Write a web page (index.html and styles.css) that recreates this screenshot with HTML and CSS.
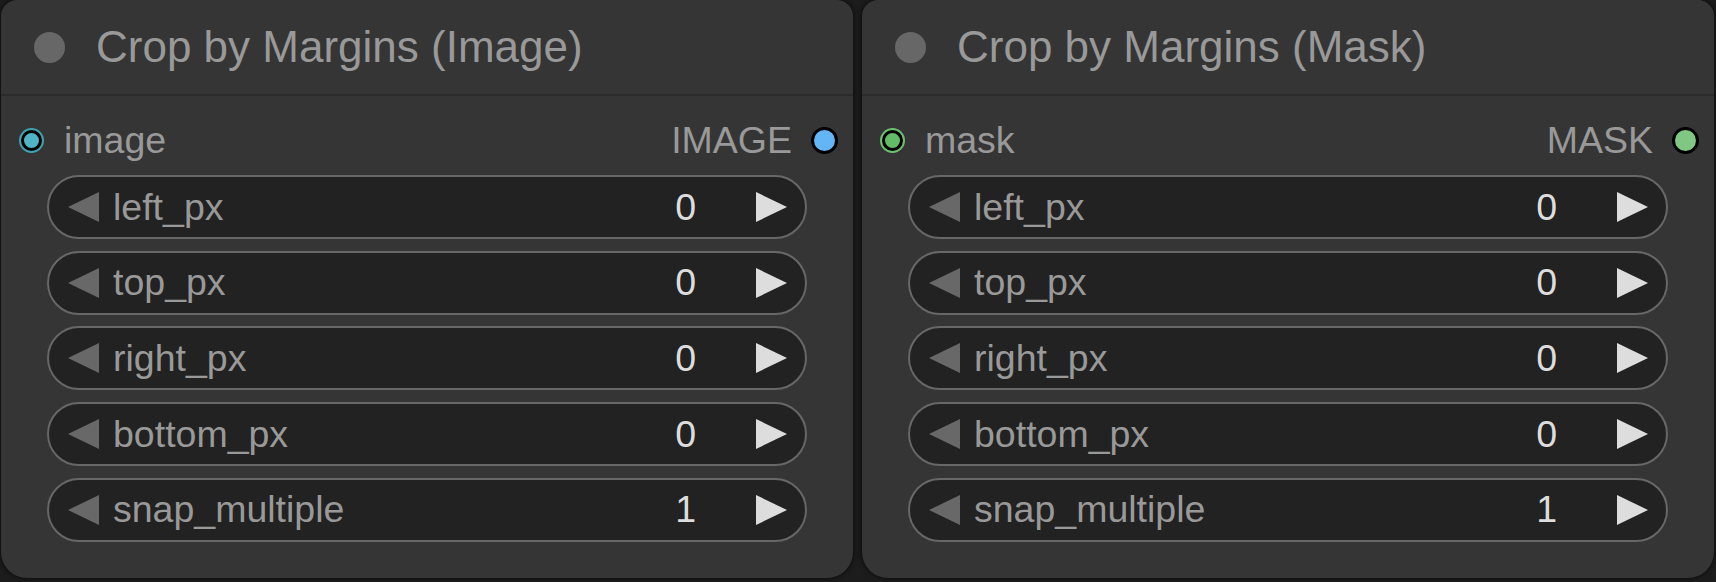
FILE: index.html
```html
<!DOCTYPE html>
<html>
<head>
<meta charset="utf-8">
<link rel="stylesheet" href="styles.css">
</head>
<body>
<div class="canvas">
  <div class="node">
    <div class="node-header">
      <span class="node-dot"></span>
      <span class="node-title">Crop by Margins (Image)</span>
    </div>
    <div class="slots">
      <span class="in-dot in-image"></span>
      <span class="slot-label">image</span>
      <span class="out-label">IMAGE</span>
      <span class="out-dot out-image"></span>
    </div>
    <div class="widgets">
      <div class="widget"><svg class="arrow arrow-left" viewBox="0 0 31 30"><polygon points="0,15 31,0 31,30"/></svg><span class="w-label">left_px</span><span class="w-value">0</span><svg class="arrow arrow-right" viewBox="0 0 31 30"><polygon points="0,0 31,15 0,30"/></svg></div>
      <div class="widget"><svg class="arrow arrow-left" viewBox="0 0 31 30"><polygon points="0,15 31,0 31,30"/></svg><span class="w-label">top_px</span><span class="w-value">0</span><svg class="arrow arrow-right" viewBox="0 0 31 30"><polygon points="0,0 31,15 0,30"/></svg></div>
      <div class="widget"><svg class="arrow arrow-left" viewBox="0 0 31 30"><polygon points="0,15 31,0 31,30"/></svg><span class="w-label">right_px</span><span class="w-value">0</span><svg class="arrow arrow-right" viewBox="0 0 31 30"><polygon points="0,0 31,15 0,30"/></svg></div>
      <div class="widget"><svg class="arrow arrow-left" viewBox="0 0 31 30"><polygon points="0,15 31,0 31,30"/></svg><span class="w-label">bottom_px</span><span class="w-value">0</span><svg class="arrow arrow-right" viewBox="0 0 31 30"><polygon points="0,0 31,15 0,30"/></svg></div>
      <div class="widget"><svg class="arrow arrow-left" viewBox="0 0 31 30"><polygon points="0,15 31,0 31,30"/></svg><span class="w-label">snap_multiple</span><span class="w-value">1</span><svg class="arrow arrow-right" viewBox="0 0 31 30"><polygon points="0,0 31,15 0,30"/></svg></div>
    </div>
  </div>
  <div class="node">
    <div class="node-header">
      <span class="node-dot"></span>
      <span class="node-title">Crop by Margins (Mask)</span>
    </div>
    <div class="slots">
      <span class="in-dot in-mask"></span>
      <span class="slot-label">mask</span>
      <span class="out-label">MASK</span>
      <span class="out-dot out-mask"></span>
    </div>
    <div class="widgets">
      <div class="widget"><svg class="arrow arrow-left" viewBox="0 0 31 30"><polygon points="0,15 31,0 31,30"/></svg><span class="w-label">left_px</span><span class="w-value">0</span><svg class="arrow arrow-right" viewBox="0 0 31 30"><polygon points="0,0 31,15 0,30"/></svg></div>
      <div class="widget"><svg class="arrow arrow-left" viewBox="0 0 31 30"><polygon points="0,15 31,0 31,30"/></svg><span class="w-label">top_px</span><span class="w-value">0</span><svg class="arrow arrow-right" viewBox="0 0 31 30"><polygon points="0,0 31,15 0,30"/></svg></div>
      <div class="widget"><svg class="arrow arrow-left" viewBox="0 0 31 30"><polygon points="0,15 31,0 31,30"/></svg><span class="w-label">right_px</span><span class="w-value">0</span><svg class="arrow arrow-right" viewBox="0 0 31 30"><polygon points="0,0 31,15 0,30"/></svg></div>
      <div class="widget"><svg class="arrow arrow-left" viewBox="0 0 31 30"><polygon points="0,15 31,0 31,30"/></svg><span class="w-label">bottom_px</span><span class="w-value">0</span><svg class="arrow arrow-right" viewBox="0 0 31 30"><polygon points="0,0 31,15 0,30"/></svg></div>
      <div class="widget"><svg class="arrow arrow-left" viewBox="0 0 31 30"><polygon points="0,15 31,0 31,30"/></svg><span class="w-label">snap_multiple</span><span class="w-value">1</span><svg class="arrow arrow-right" viewBox="0 0 31 30"><polygon points="0,0 31,15 0,30"/></svg></div>
    </div>
  </div>
</div>
</body>
</html>
```
FILE: styles.css
```css
html, body {
  margin: 0;
  padding: 0;
  background: #1c1c1c;
  width: 1716px;
  height: 582px;
  overflow: hidden;
  font-family: "Liberation Sans", Arial, sans-serif;
}

.canvas {
  display: flex;
  gap: 9px;
  padding-left: 1px;
  height: 578px;
}

.node {
  width: 852px;
  height: 578px;
  box-sizing: border-box;
  background: #353535;
  border-radius: 16px 16px 26px 26px;
  box-shadow: 0 0 4px 1px rgba(0, 0, 0, 0.55);
  display: flex;
  flex-direction: column;
}

.node-header {
  height: 94px;
  border-bottom: 2px solid #2b2b2b;
  display: flex;
  align-items: center;
  padding-left: 33px;
}

.node-dot {
  width: 31px;
  height: 31px;
  border-radius: 50%;
  background: #676767;
  flex: none;
}

.node-title {
  margin-left: 31px;
  font-size: 44px;
  color: #999999;
  white-space: nowrap;
}

.slots {
  margin-top: 12px;
  height: 64px;
  display: flex;
  align-items: center;
  font-size: 37.5px;
  color: #999999;
  padding-left: 20px;
  padding-right: 15px;
}

.in-dot {
  width: 15px;
  height: 15px;
  border-radius: 50%;
  border: 3px solid #000;
  flex: none;
}

.in-image {
  background: #4fb5c6;
  box-shadow: 0 0 0 2px #3fa3b2;
}

.in-mask {
  background: #62bb67;
  box-shadow: 0 0 0 2px #6cc271;
}

.slot-label {
  margin-left: 22px;
  flex: 1;
}

.out-label {
  margin-right: 19px;
}

.out-dot {
  width: 21px;
  height: 21px;
  border-radius: 50%;
  border: 3px solid #000;
  flex: none;
}

.out-image {
  background: #64b5f6;
}

.out-mask {
  background: #81c784;
}

.widgets {
  margin-top: 3px;
  padding: 0 46px;
  display: flex;
  flex-direction: column;
  gap: 11.7px;
}

.widget {
  height: 64px;
  box-sizing: border-box;
  border: 2px solid #676767;
  border-radius: 32px;
  background: #222222;
  display: flex;
  align-items: center;
  padding: 0 18px 0 19px;
  font-size: 37.5px;
}

.arrow {
  width: 31px;
  height: 30px;
  flex: none;
}

.arrow-left {
  fill: #686868;
}

.arrow-right {
  fill: #dddddd;
  margin-left: 60px;
}

.w-label {
  margin-left: 14px;
  flex: 1;
  color: #999999;
  white-space: nowrap;
}

.w-value {
  color: #dddddd;
}
```
